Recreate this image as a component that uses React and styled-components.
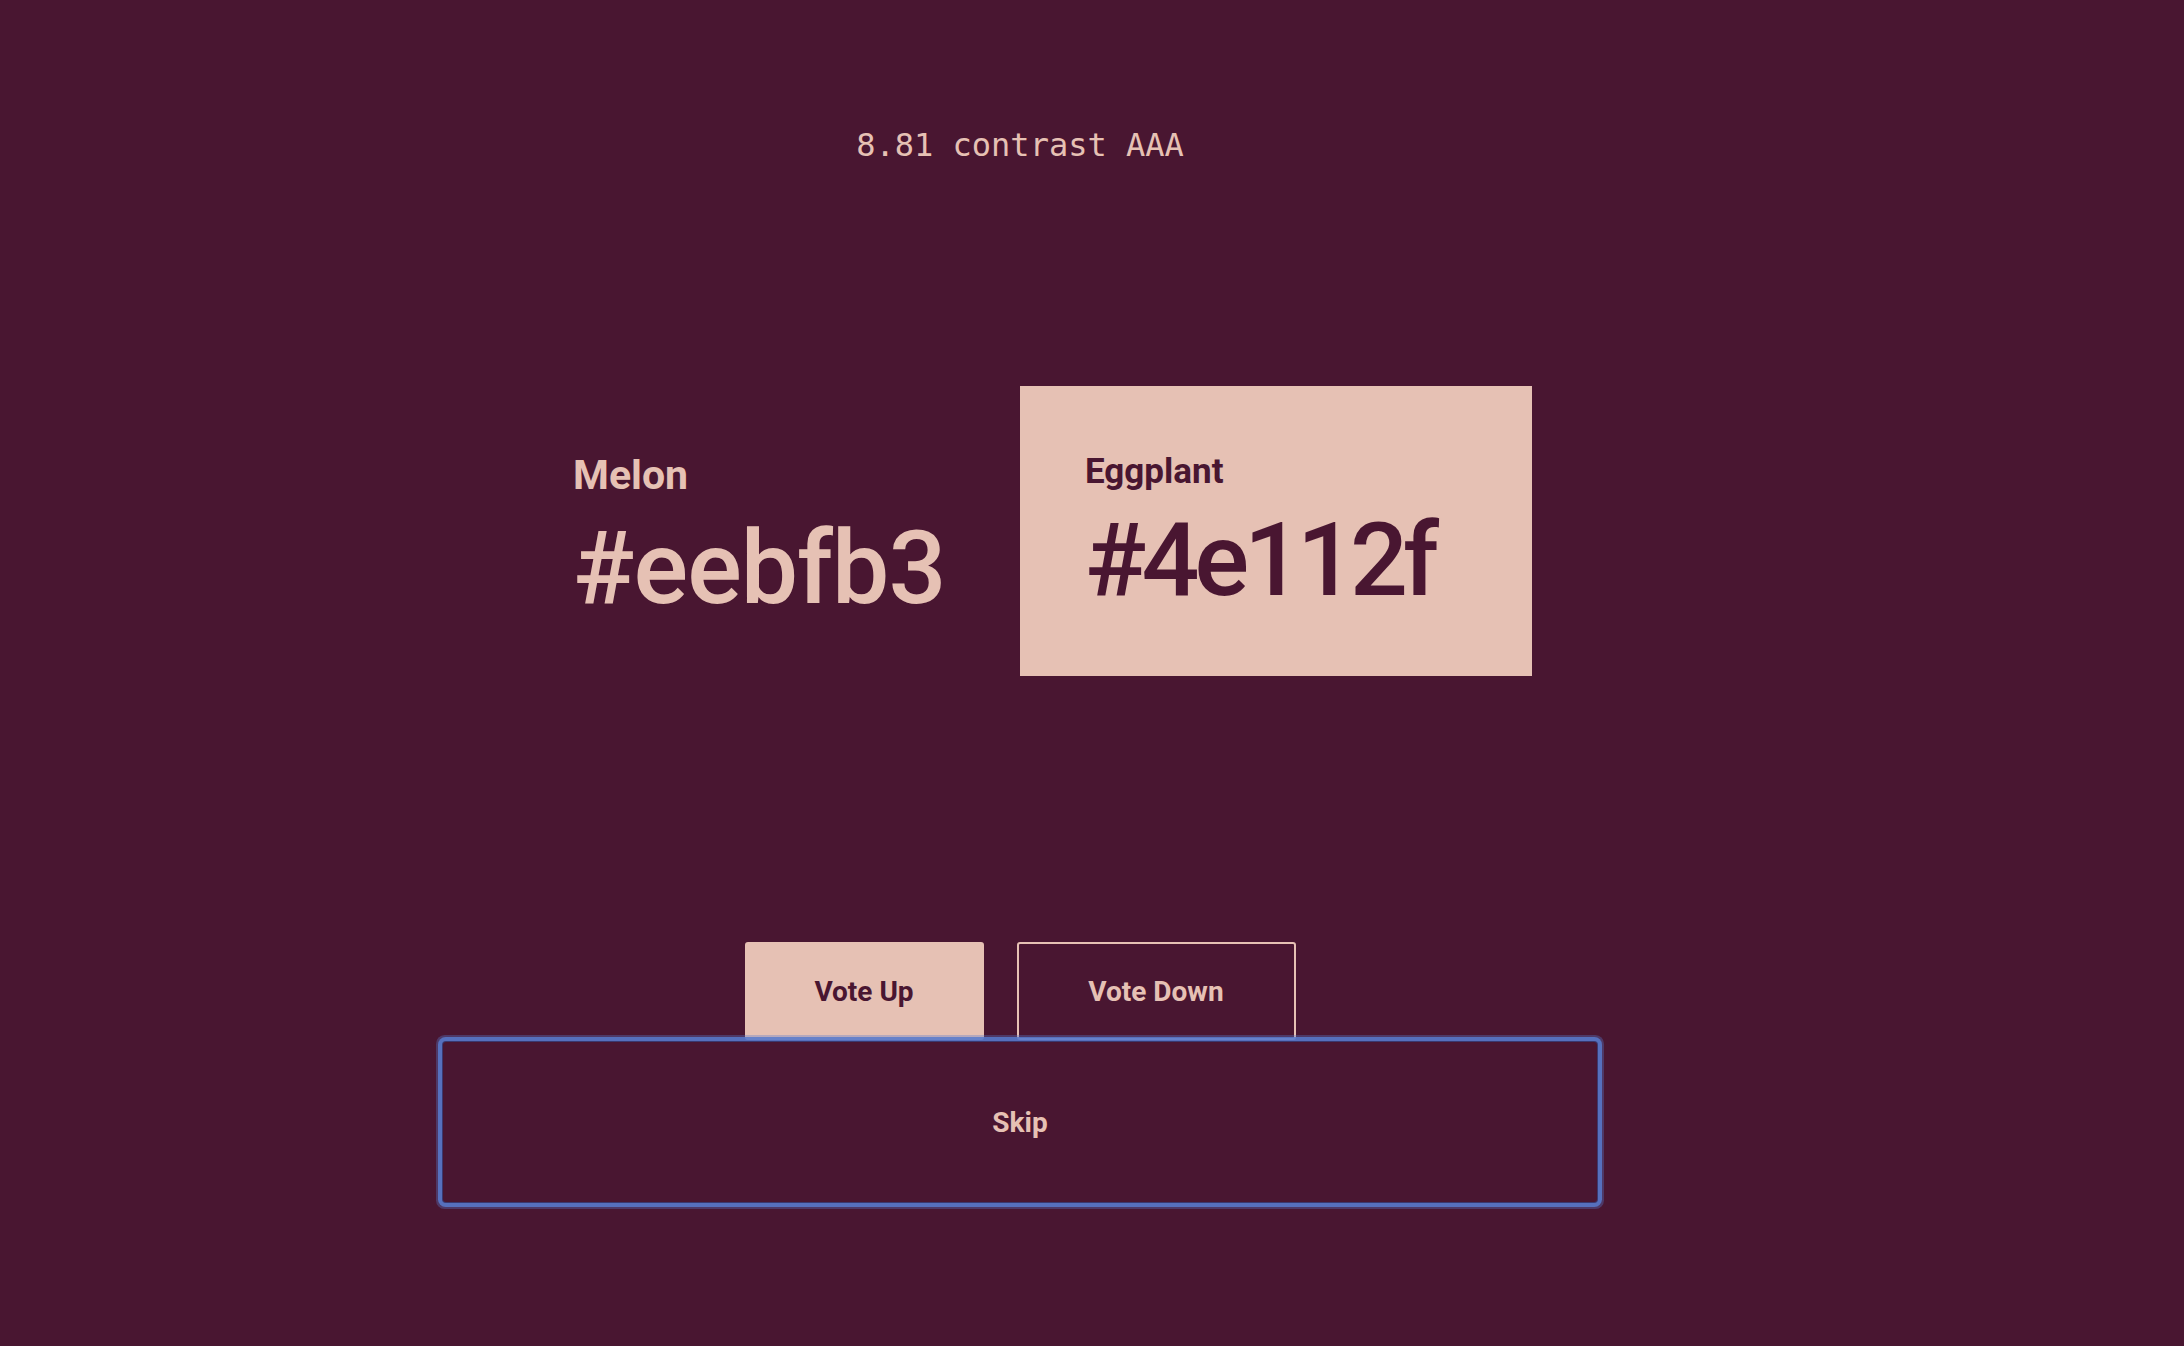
import styled, { createGlobalStyle } from 'styled-components';

const bg = '#491631';
const melon = '#e6c1b4';

const GlobalStyle = createGlobalStyle`
  html, body {
    margin: 0;
    padding: 0;
    background: ${bg};
  }
  body {
    font-family: 'Liberation Sans', Arial, sans-serif;
    -webkit-font-smoothing: antialiased;
  }
`;

export default function App() {
  return (
    <>
      <GlobalStyle />
      <Page>
        <Contrast>8.81 contrast AAA</Contrast>
        <Pair>
          <Swatch $shift={4}>
            <Label $size={41}>Melon</Label>
            <Hex $spacing={-1}>#eebfb3</Hex>
          </Swatch>
          <Swatch $filled>
            <Label $size={35}>Eggplant</Label>
            <Hex $spacing={-5}>#4e112f</Hex>
          </Swatch>
        </Pair>
        <Votes>
          <Button $primary $width={239}>Vote Up</Button>
          <Button $width={279}>Vote Down</Button>
        </Votes>
        <SkipButton>Skip</SkipButton>
      </Page>
    </>
  );
}

const Page = styled.main`
  width: 2040px;
  min-height: 1346px;
  display: flex;
  flex-direction: column;
  align-items: center;
  box-sizing: border-box;
  padding-top: 125px;
`;

const Contrast = styled.p`
  margin: 0;
  font-family: 'DejaVu Sans Mono', 'Liberation Mono', monospace;
  font-size: 32px;
  line-height: 40px;
  color: ${melon};
`;

const Pair = styled.section`
  display: flex;
  margin-top: 221px;
`;

const Swatch = styled.div`
  width: 512px;
  height: 290px;
  box-sizing: border-box;
  padding: ${(p) => (p.$shift || 0) * 2}px 0 0 65px;
  display: flex;
  flex-direction: column;
  justify-content: center;
  background: ${(p) => (p.$filled ? melon : 'transparent')};
  color: ${(p) => (p.$filled ? bg : melon)};
`;

const Label = styled.h2`
  margin: 0 0 16px;
  font-family: 'Roboto', 'Liberation Sans', sans-serif;
  font-weight: 700;
  font-size: ${(p) => p.$size}px;
  line-height: 1.2;
`;

const Hex = styled.h1`
  margin: 0;
  font-family: 'Roboto', 'Liberation Sans', sans-serif;
  font-weight: 500;
  font-size: 102px;
  line-height: 1;
  letter-spacing: ${(p) => p.$spacing}px;
`;

const Votes = styled.div`
  display: flex;
  gap: 33px;
  margin-top: 266px;
`;

const Button = styled.button`
  width: ${(p) => p.$width}px;
  height: 98px;
  box-sizing: border-box;
  border-radius: 3px;
  border: 2px solid ${melon};
  background: ${(p) => (p.$primary ? melon : 'transparent')};
  color: ${(p) => (p.$primary ? bg : melon)};
  font-family: 'Roboto', 'Liberation Sans', sans-serif;
  font-weight: 700;
  font-size: 28px;
  cursor: pointer;
`;

const SkipButton = styled.button`
  position: relative;
  width: 1154px;
  height: 160px;
  margin-top: 2px;
  border: none;
  border-radius: 3px;
  background: ${bg};
  color: ${melon};
  font-family: 'Roboto', 'Liberation Sans', sans-serif;
  font-weight: 700;
  font-size: 28px;
  box-shadow: 0 0 0 1px rgba(40, 20, 60, 0.6), 0 0 0 5px rgba(88, 122, 205, 0.85),
    0 0 0 7px rgba(88, 122, 205, 0.35);
  cursor: pointer;
`;
